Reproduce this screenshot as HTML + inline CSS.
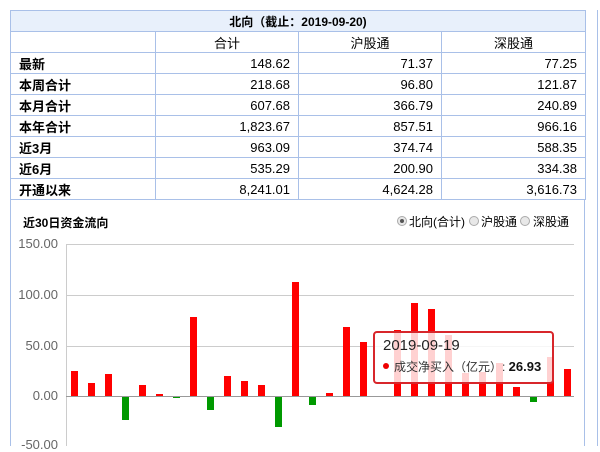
<!DOCTYPE html>
<html><head><meta charset="utf-8"><style>
*{margin:0;padding:0;box-sizing:border-box}
body{width:600px;height:446px;overflow:hidden;background:#fff;font-family:"Liberation Sans","Noto Sans CJK SC",sans-serif;position:relative;color:#000}
.a{position:absolute}
table{position:absolute;left:10px;top:10px;border-collapse:collapse;font-size:13px}
td{border:1px solid #a9c0e8;height:21px;padding:0 8px;white-space:nowrap}
td.n{text-align:right}
td.l{font-weight:bold}
.hd td{background:#e8f0fb;text-align:center;font-weight:bold;font-size:12px}
.ch td{text-align:center}
.yl{position:absolute;width:50px;text-align:right;left:8px;font-size:13px;color:#666}
.g{position:absolute;left:66px;width:508px;height:1px;background:#ccc}
.b{position:absolute;width:7px}
.r{background:#f00}.gr{background:#090}
.rad{position:absolute;width:10px;height:10px;border-radius:50%;border:1px solid #aaa;background:#e8e8e8;top:216px}
</style></head><body>
<div class="a" style="left:10px;top:199px;width:1px;height:247px;background:#a9c0e8"></div>
<div class="a" style="left:584px;top:199px;width:1px;height:247px;background:#a9c0e8"></div>
<div class="a" style="left:597px;top:10px;width:1px;height:436px;background:#a9c0e8"></div>
<table>
<tr class="hd"><td colspan="4" style="width:575px">北向（截止：2019-09-20)</td></tr>
<tr class="ch"><td style="width:145px"></td><td style="width:143px">合计</td><td style="width:143px">沪股通</td><td style="width:144px">深股通</td></tr>
<tr><td class="l">最新</td><td class="n">148.62</td><td class="n">71.37</td><td class="n">77.25</td></tr>
<tr><td class="l">本周合计</td><td class="n">218.68</td><td class="n">96.80</td><td class="n">121.87</td></tr>
<tr><td class="l">本月合计</td><td class="n">607.68</td><td class="n">366.79</td><td class="n">240.89</td></tr>
<tr><td class="l">本年合计</td><td class="n">1,823.67</td><td class="n">857.51</td><td class="n">966.16</td></tr>
<tr><td class="l">近3月</td><td class="n">963.09</td><td class="n">374.74</td><td class="n">588.35</td></tr>
<tr><td class="l">近6月</td><td class="n">535.29</td><td class="n">200.90</td><td class="n">334.38</td></tr>
<tr><td class="l">开通以来</td><td class="n">8,241.01</td><td class="n">4,624.28</td><td class="n">3,616.73</td></tr>
</table>
<div class="a" style="left:23px;top:214px;font-size:12px;font-weight:bold">近30日资金流向</div>
<div class="rad" style="left:397px"><div style="position:absolute;left:2px;top:2px;width:4px;height:4px;border-radius:50%;background:#555"></div></div>
<div class="a" style="left:409px;top:213px;font-size:12px">北向(合计)</div>
<div class="rad" style="left:469px"></div>
<div class="a" style="left:481px;top:213px;font-size:12px">沪股通</div>
<div class="rad" style="left:520px"></div>
<div class="a" style="left:533px;top:213px;font-size:12px">深股通</div>
<div class="yl" style="top:236px">150.00</div>
<div class="yl" style="top:287px">100.00</div>
<div class="yl" style="top:338px">50.00</div>
<div class="yl" style="top:388px">0.00</div>
<div class="yl" style="top:437px">-50.00</div>
<div class="g" style="top:244px"></div>
<div class="g" style="top:295px"></div>
<div class="g" style="top:346px"></div>
<div class="a" style="left:66px;top:244px;width:1px;height:202px;background:#ccc"></div>
<div class="b r" style="left:71px;top:371px;height:25px"></div>
<div class="b r" style="left:88px;top:383px;height:13px"></div>
<div class="b r" style="left:105px;top:374px;height:22px"></div>
<div class="b gr" style="left:122px;top:396px;height:24px"></div>
<div class="b r" style="left:139px;top:385px;height:11px"></div>
<div class="b r" style="left:156px;top:394px;height:2px"></div>
<div class="b gr" style="left:173px;top:396px;height:2px"></div>
<div class="b r" style="left:190px;top:317px;height:79px"></div>
<div class="b gr" style="left:207px;top:396px;height:14px"></div>
<div class="b r" style="left:224px;top:376px;height:20px"></div>
<div class="b r" style="left:241px;top:381px;height:15px"></div>
<div class="b r" style="left:258px;top:385px;height:11px"></div>
<div class="b gr" style="left:275px;top:396px;height:31px"></div>
<div class="b r" style="left:292px;top:282px;height:114px"></div>
<div class="b gr" style="left:309px;top:396px;height:9px"></div>
<div class="b r" style="left:326px;top:393px;height:3px"></div>
<div class="b r" style="left:343px;top:327px;height:69px"></div>
<div class="b r" style="left:360px;top:342px;height:54px"></div>
<div class="b r" style="left:394px;top:330px;height:66px"></div>
<div class="b r" style="left:411px;top:303px;height:93px"></div>
<div class="b r" style="left:428px;top:309px;height:87px"></div>
<div class="b r" style="left:445px;top:335px;height:61px"></div>
<div class="b r" style="left:462px;top:373px;height:23px"></div>
<div class="b r" style="left:479px;top:372px;height:24px"></div>
<div class="b r" style="left:496px;top:363px;height:33px"></div>
<div class="b r" style="left:513px;top:387px;height:9px"></div>
<div class="b gr" style="left:530px;top:396px;height:6px"></div>
<div class="b r" style="left:547px;top:357px;height:39px"></div>
<div class="b r" style="left:564px;top:369px;height:27px"></div>
<div class="a" style="left:66px;top:396px;width:508px;height:1px;background:#999"></div>
<div class="a" style="left:373px;top:331px;width:181px;height:53px;border:2px solid #d8262b;border-radius:4px;background:rgba(255,255,255,0.82)">
<div class="a" style="left:8px;top:4px;font-size:15px;color:#222">2019-09-19</div>
<div class="a" style="left:8px;top:25px;font-size:12px;color:#333;white-space:nowrap"><span style="display:inline-block;width:6px;height:6px;border-radius:50%;background:#e00;margin-right:5px;vertical-align:2px"></span>成交净买入（亿元）: <b style="font-size:13px;color:#111">26.93</b></div>
</div>
</body></html>
